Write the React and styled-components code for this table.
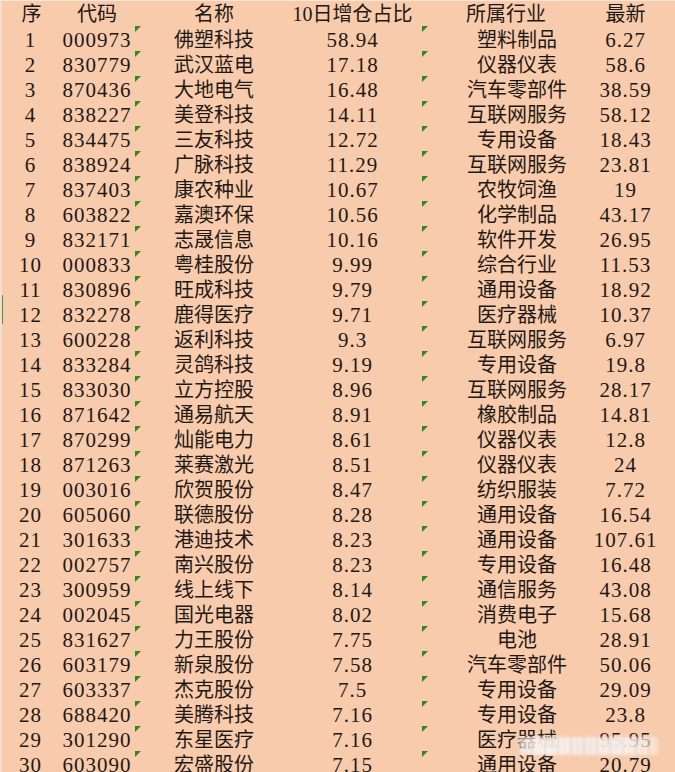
import React from 'react';
import styled, { createGlobalStyle } from 'styled-components';

const GlobalStyle = createGlobalStyle`
  html, body {
    margin: 0;
    padding: 0;
    background: #f8cbad;
  }
`;

// 컬럼 폭과 글자 중심 보정값 (px)
const columns = [
  { width: 57, head: 1, body: 0 },
  { width: 76, head: 0, body: 0 },
  { width: 158, head: 0, body: 0 },
  { width: 129, head: -5, body: -5 },
  { width: 140, head: 14, body: 25 },
  { width: 115, head: 6, body: 6 }
];

const headers = ['序', '代码', '名称', '10日增仓占比', '所属行业', '最新'];

const rows = [
  ['000973', '佛塑科技', '58.94', '塑料制品', '6.27'],
  ['830779', '武汉蓝电', '17.18', '仪器仪表', '58.6'],
  ['870436', '大地电气', '16.48', '汽车零部件', '38.59'],
  ['838227', '美登科技', '14.11', '互联网服务', '58.12'],
  ['834475', '三友科技', '12.72', '专用设备', '18.43'],
  ['838924', '广脉科技', '11.29', '互联网服务', '23.81'],
  ['837403', '康农种业', '10.67', '农牧饲渔', '19'],
  ['603822', '嘉澳环保', '10.56', '化学制品', '43.17'],
  ['832171', '志晟信息', '10.16', '软件开发', '26.95'],
  ['000833', '粤桂股份', '9.99', '综合行业', '11.53'],
  ['830896', '旺成科技', '9.79', '通用设备', '18.92'],
  ['832278', '鹿得医疗', '9.71', '医疗器械', '10.37'],
  ['600228', '返利科技', '9.3', '互联网服务', '6.97'],
  ['833284', '灵鸽科技', '9.19', '专用设备', '19.8'],
  ['833030', '立方控股', '8.96', '互联网服务', '28.17'],
  ['871642', '通易航天', '8.91', '橡胶制品', '14.81'],
  ['870299', '灿能电力', '8.61', '仪器仪表', '12.8'],
  ['871263', '莱赛激光', '8.51', '仪器仪表', '24'],
  ['003016', '欣贺股份', '8.47', '纺织服装', '7.72'],
  ['605060', '联德股份', '8.28', '通用设备', '16.54'],
  ['301633', '港迪技术', '8.23', '通用设备', '107.61'],
  ['002757', '南兴股份', '8.23', '专用设备', '16.48'],
  ['300959', '线上线下', '8.14', '通信服务', '43.08'],
  ['002045', '国光电器', '8.02', '消费电子', '15.68'],
  ['831627', '力王股份', '7.75', '电池', '28.91'],
  ['603179', '新泉股份', '7.58', '汽车零部件', '50.06'],
  ['603337', '杰克股份', '7.5', '专用设备', '29.09'],
  ['688420', '美腾科技', '7.16', '专用设备', '23.8'],
  ['301290', '东星医疗', '7.16', '医疗器械', '95.95'],
  ['603090', '宏盛股份', '7.15', '通用设备', '20.79']
];

const App = () => {
  return (
    <>
      <GlobalStyle />
      <Sheet>
        <Row $head>
          {headers.map((h, i) => (
            <Cell key={i} $w={columns[i].width}>
              <Text $shift={columns[i].head} $lift={1}>{h}</Text>
            </Cell>
          ))}
        </Row>
        {rows.map((r, idx) => {
          const cells = [String(idx + 1), ...r];
          return (
            <Row key={idx} $selected={idx === 11}>
              {cells.map((c, i) => (
                <Cell key={i} $w={columns[i].width} $flag={i === 2 || i === 4}>
                  <Text $shift={columns[i].body} $lift={2} $num={i !== 2 && i !== 4}>
                    {c}
                  </Text>
                </Cell>
              ))}
            </Row>
          );
        })}
        <Watermark />
      </Sheet>
    </>
  );
};

const Sheet = styled.div`
  position: relative;
  width: 675px;
  height: 772px;
  overflow: hidden;
  background: #f8cbad;
  border-top: 1px solid #fbe6d8;
  border-left: 2px solid #f3ddd0;
  box-sizing: border-box;
  font-family: 'Liberation Serif', 'Noto Sans CJK SC', serif;
  font-size: 20px;
  color: #1f1915;
`;

const Row = styled.div`
  position: relative;
  display: flex;
  height: 25px;

  &::before {
    content: '';
    display: ${(p) => (p.$selected ? 'block' : 'none')};
    position: absolute;
    left: -2px;
    top: -6px;
    width: 3px;
    height: 29px;
    background: #3f9b35;
  }
`;

const Cell = styled.div`
  position: relative;
  flex: 0 0 ${(p) => p.$w}px;
  min-width: 0;
  display: flex;
  align-items: center;
  justify-content: center;
  white-space: nowrap;

  &::before {
    content: '';
    display: ${(p) => (p.$flag ? 'block' : 'none')};
    position: absolute;
    left: 0;
    top: 0;
    width: 0;
    height: 0;
    border-top: 6px solid #2f8a1e;
    border-right: 6px solid transparent;
  }
`;

const Text = styled.span`
  display: block;
  flex: none;
  line-height: 25px;
  transform: translate(${(p) => p.$shift}px, ${(p) => p.$lift}px);
  letter-spacing: ${(p) => (p.$num ? '1px' : '0')};
  font-size: ${(p) => (p.$num ? '21px' : '20px')};
`;

const Watermark = styled.div`
  position: absolute;
  left: 516px;
  top: 736px;
  width: 140px;
  height: 18px;
  background:
    repeating-linear-gradient(
      90deg,
      rgba(150, 130, 120, 0.22) 0px,
      rgba(150, 130, 120, 0.22) 2px,
      rgba(255, 255, 255, 0) 2px,
      rgba(255, 255, 255, 0) 7px,
      rgba(120, 100, 90, 0.15) 7px,
      rgba(120, 100, 90, 0.15) 8px,
      rgba(255, 255, 255, 0) 8px,
      rgba(255, 255, 255, 0) 13px
    ),
    linear-gradient(
      90deg,
      rgba(252, 246, 242, 0.6) 0%,
      rgba(252, 248, 245, 0.92) 15%,
      rgba(245, 238, 232, 0.9) 45%,
      rgba(250, 244, 240, 0.92) 75%,
      rgba(252, 246, 242, 0.55) 100%
    );
  filter: blur(1.5px);
`;

export default App;
